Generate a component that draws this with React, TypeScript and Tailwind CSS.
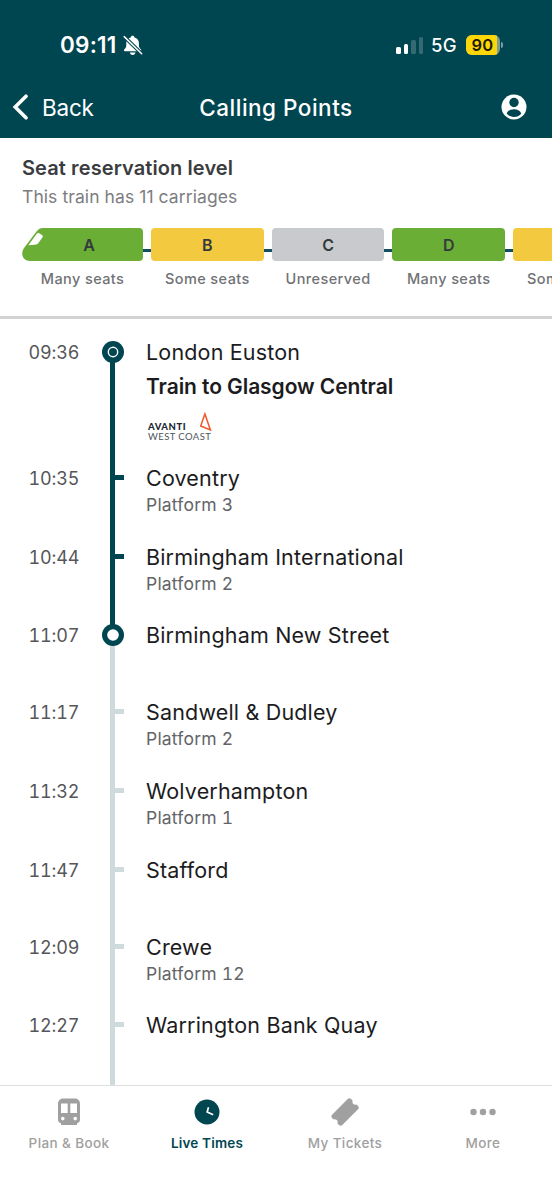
import type { ReactNode } from "react";
import clsx from "clsx";

type Stop = {
  time: string;
  name: string;
  platform?: string;
  height: string;
  marker: "origin" | "current" | "tick";
  before: "none" | "dark" | "light";
  after: "dark" | "light";
};

const STOPS: Stop[] = [
  { time: "09:36", name: "London Euston", height: "h-[126px]", marker: "origin", before: "none", after: "dark" },
  { time: "10:35", name: "Coventry", platform: "3", height: "h-[78.5px]", marker: "tick", before: "dark", after: "dark" },
  { time: "10:44", name: "Birmingham International", platform: "2", height: "h-[78.5px]", marker: "tick", before: "dark", after: "dark" },
  { time: "11:07", name: "Birmingham New Street", height: "h-[77px]", marker: "current", before: "dark", after: "light" },
  { time: "11:17", name: "Sandwell & Dudley", platform: "2", height: "h-[79px]", marker: "tick", before: "light", after: "light" },
  { time: "11:32", name: "Wolverhampton", platform: "1", height: "h-[78.5px]", marker: "tick", before: "light", after: "light" },
  { time: "11:47", name: "Stafford", height: "h-[77px]", marker: "tick", before: "light", after: "light" },
  { time: "12:09", name: "Crewe", platform: "12", height: "h-[78.5px]", marker: "tick", before: "light", after: "light" },
  { time: "12:27", name: "Warrington Bank Quay", height: "h-[78px]", marker: "tick", before: "light", after: "light" },
];

const CARRIAGES = [
  { letter: "B", label: "Some seats", color: "bg-[#f3c940]" },
  { letter: "C", label: "Unreserved", color: "bg-[#c8cacd]" },
  { letter: "D", label: "Many seats", color: "bg-[#6bae35]" },
  { letter: "E", label: "Some seats", color: "bg-[#f3c940]" },
];

const RAIL = {
  none: "bg-transparent",
  dark: "bg-[#004650]",
  light: "bg-[#cfdadd]",
};

function BellOff() {
  return (
    <svg width="20" height="21" viewBox="0 0 20 21" fill="none">
      <path
        d="M9.600.8c-1 0-1.700.7-1.900 1.600C5 3.200 3.300 5.200 3.300 7.800v2.700c0 1.700-.8 2.700-1.900 3.800-.9.900-.5 2 .7 2h15c1.200 0 1.600-1.100.7-2-1.100-1.100-1.900-2.100-1.900-3.800V7.800c0-2.600-1.700-4.600-4.400-5.400C11.300 1.500 10.600.8 9.600.8z"
        fill="#fff"
      />
      <path d="M6.800 17.600h5.700c-.3 1.500-1.400 2.300-2.850 2.300s-2.600-.8-2.850-2.300z" fill="#fff" />
      <path d="M1.200 1.600 18.700 18.800" stroke="#004650" strokeWidth="3.600" />
      <path d="M1.200 1.600 18.700 18.800" stroke="#fff" strokeWidth="1.500" strokeLinecap="round" />
    </svg>
  );
}

function StatusBar() {
  return (
    <div className="flex h-[74px] items-end pr-[49px] pb-[17px] pl-[60px]">
      <div className="flex h-6 items-center">
        <span className="w-[63px] text-[22.5px] leading-6 font-semibold tracking-[0.2px]">09:11</span>
        <BellOff />
      </div>
      <div className="ml-auto flex h-6 items-center">
        <div className="flex h-[17px] items-end gap-[3px]">
          <span className="h-[7px] w-[4.5px] rounded-[1.5px] bg-white" />
          <span className="h-[10px] w-[4.5px] rounded-[1.5px] bg-white" />
          <span className="h-[13.5px] w-[4.5px] rounded-[1.5px] bg-[#356a73]" />
          <span className="h-[17px] w-[4.5px] rounded-[1.5px] bg-[#356a73]" />
        </div>
        <span className="ml-[8px] w-[35px] text-[18.5px] leading-6 font-medium tracking-[0.2px]">5G</span>
        <div className="flex h-[20px] w-[34px] overflow-hidden rounded-[6px] bg-[#7d9d91]">
          <span className="w-[31px] bg-[#fdd60a] pl-[2px] text-center text-[16.5px] leading-[20px] font-semibold tracking-[0.2px] text-[#1c1c00]">
            90
          </span>
        </div>
        <span className="ml-[1px] h-[6px] w-[2px] rounded-r-full bg-[#7d9da2]" />
      </div>
    </div>
  );
}

function NavBar() {
  return (
    <div className="grid h-16 grid-cols-[1fr_auto_1fr] items-center px-[12px] pt-[2px]">
      <div className="flex items-center">
        <svg width="17" height="26" viewBox="0 0 17 26" fill="none">
          <path d="M14 2.200 3.200 13 14 23.800" stroke="#fff" strokeWidth="3.600" strokeLinecap="round" />
        </svg>
        <span className="mt-px ml-[13px] text-[22.5px] leading-7 tracking-[-0.2px]">Back</span>
      </div>
      <h1 className="mt-px text-[22.5px] leading-7 font-medium tracking-[0.5px]">Calling Points</h1>
      <svg className="mr-[13.5px] justify-self-end" width="26" height="26" viewBox="0 0 26 26">
        <circle cx="13" cy="13" r="12.500" fill="#fff" />
        <circle cx="13" cy="8.500" r="4.700" fill="#004650" />
        <path d="M5.700 19.400c1.200-2.800 4.100-4.200 7.300-4.200s6.100 1.400 7.300 4.200c-1.700 2.300-4.300 3.600-7.300 3.600s-5.600-1.300-7.300-3.600z" fill="#004650" />
      </svg>
    </div>
  );
}

function Carriages() {
  return (
    <div className="mt-[18px] flex overflow-hidden">
      <div className="w-[121px] shrink-0 text-center">
        <div className="relative h-[33px]">
          <svg className="block" width="121" height="33" viewBox="0 0 121 33">
            <path d="M21 0H117a4 4 0 0 1 4 4V29a4 4 0 0 1-4 4H8C1 33-2 26 2 20L14.500 3.500C16.500 1 18 0 21 0z" fill="#6bae35" />
            <path d="M14.800 5.700c.8-1 1.400-1 2.400-.4l2.800 1.700c1 .7 1 1.600.4 2.500l-3.800 5.300c-1 1.400-2 1.900-3.800 2l-6.500.4z" fill="#fff" />
          </svg>
          <span className="absolute inset-0 pl-[13px] text-[16px] leading-[34px] font-semibold text-[#333a3c]">A</span>
        </div>
        <p className="mt-[8px] text-[14.5px] leading-5 font-medium tracking-[0.4px] text-[#717276]">Many seats</p>
      </div>
      {CARRIAGES.map((carriage) => (
        <div key={carriage.letter} className="flex shrink-0">
          <span className="mt-[21px] h-[3px] w-[8px] bg-[#124e64]" />
          <div className="w-[112.7px] text-center">
            <div className={clsx("h-[33px] rounded-[4px] text-[16px] leading-[34px] font-semibold text-[#333a3c]", carriage.color)}>
              {carriage.letter}
            </div>
            <p className="mt-[8px] text-[14.5px] leading-5 font-medium tracking-[0.4px] text-[#717276]">{carriage.label}</p>
          </div>
        </div>
      ))}
    </div>
  );
}

function Marker({ type, color }: { type: Stop["marker"]; color: string }) {
  if (type === "tick") {
    return <span className={clsx("absolute top-[13px] left-[14px] h-[5px] w-[9px]", color)} />;
  }
  return (
    <svg className="absolute top-[5px] left-[0.5px]" width="22" height="22" viewBox="0 0 22 22">
      <circle cx="11" cy="11" r="11" fill="#004650" />
      {type === "origin" ? (
        <circle cx="11" cy="11" r="4.700" fill="none" stroke="#fff" strokeWidth="1.400" />
      ) : (
        <circle cx="11" cy="11" r="5.800" fill="#fff" />
      )}
    </svg>
  );
}

function OperatorLogo() {
  return (
    <div className="mt-[10px] ml-[2px] w-[66px] font-[Lato]">
      <div className="flex h-[20px] items-end justify-between">
        <span className="text-[9.5px] leading-[11px] font-black tracking-[0.55px] text-[#1b2a35]">AVANTI</span>
        <svg className="mr-[2px]" width="14" height="20" viewBox="0 0 14 20" fill="none">
          <path d="M6.900 2 2.700 14 12.400 18z" stroke="#f0562b" strokeWidth="1.500" />
        </svg>
      </div>
      <p className="text-[9.5px] leading-[9px] tracking-[0.42px] whitespace-nowrap text-[#4c555c]">WEST COAST</p>
    </div>
  );
}

function StopRow({ stop }: { stop: Stop }) {
  return (
    <li className={clsx("flex shrink-0", stop.height)}>
      <span className="mt-px w-[101px] pl-[28.5px] text-[18px] leading-8 tracking-[-0.15px] text-[#55565a] tabular-nums">{stop.time}</span>
      <div className="relative flex w-[23px] flex-col items-center">
        <span className={clsx("h-4 w-[5px]", RAIL[stop.before])} />
        <span className={clsx("w-[5px] grow", RAIL[stop.after])} />
        <Marker type={stop.marker} color={RAIL[stop.after]} />
      </div>
      <div className="ml-[22px]">
        <p className="text-[21.5px] leading-8 tracking-[0.17px] text-[#1c1c1e]">{stop.name}</p>
        {stop.platform && (
          <p className="text-[17.5px] leading-[22px] tracking-[0.2px] text-[#636467] tabular-nums">Platform {stop.platform}</p>
        )}
        {stop.marker === "origin" && (
          <>
            <p className="mt-[4px] text-[21px] leading-[30px] font-semibold tracking-[-0.08px] text-[#1c1c1e]">Train to Glasgow Central</p>
            <OperatorLogo />
          </>
        )}
      </div>
    </li>
  );
}

function Tab({ label, active, children }: { label: string; active?: boolean; children: ReactNode }) {
  return (
    <div className={clsx("flex flex-col items-center font-medium", active ? "text-[#004650]" : "text-[#a0a0a0]")}>
      <svg width="28" height="28" viewBox="0 0 28 28" fill="currentColor">
        {children}
      </svg>
      <span className={clsx("mt-[7px] text-[13.5px] leading-5", active ? "font-semibold tracking-[0.2px]" : "tracking-[0.38px]")}>{label}</span>
    </div>
  );
}

function TabBar() {
  return (
    <nav className="grid h-[115px] shrink-0 grid-cols-4 border-t border-[#dedede] bg-white pt-[12px]">
      <Tab label="Plan & Book">
        <path
          fillRule="evenodd"
          d="M8 .5h12a5 5 0 0 1 5 5v16a4 4 0 0 1-3 3.800v1.700H6v-1.700a4 4 0 0 1-3-3.800v-16a5 5 0 0 1 5-5zM6 5.500v9.500h6.700V5.500zm9.300 0v9.500H22V5.500zM7.800 18.800a1.800 1.800 0 1 0 0 3.600 1.800 1.800 0 0 0 0-3.600zm12.400 0a1.800 1.800 0 1 0 0 3.600 1.800 1.800 0 0 0 0-3.600z"
        />
      </Tab>
      <Tab label="Live Times" active>
        <circle cx="14" cy="14" r="12.500" />
        <path d="M15.500 9.300 14.200 14l6 2.800" fill="none" stroke="#fff" strokeWidth="1.700" />
      </Tab>
      <Tab label="My Tickets">
        <path d="M16.700 1.100q1.700-1.600 3.400 0l1.500 1.500c-.8 2.700 1.400 4.800 4 3.900l1.400 1.500q1.600 1.600 0 3.300L11.300 26.900q-1.700 1.600-3.300 0l-1.500-1.500c.9-2.600-1.300-4.800-3.900-4L1.100 20q-1.600-1.700 0-3.300z" />
      </Tab>
      <Tab label="More">
        <circle cx="4.500" cy="14" r="3.200" />
        <circle cx="14" cy="14" r="3.200" />
        <circle cx="23.500" cy="14" r="3.200" />
      </Tab>
    </nav>
  );
}

export default function App() {
  return (
    <main className="flex h-[1200px] w-[552px] flex-col overflow-hidden bg-white font-[Inter,sans-serif]">
      <header className="h-[138px] shrink-0 bg-[#004650] text-white">
        <StatusBar />
        <NavBar />
      </header>

      <section className="h-[181px] shrink-0 border-b-[3px] border-[#d3d3d3] pt-[16px] pl-[22px]">
        <h2 className="text-[20px] leading-7 font-semibold tracking-[0.1px] text-[#3b3c40]">Seat reservation level</h2>
        <p className="mt-[2px] text-[17.5px] leading-[26px] tracking-[0.08px] text-[#7c7d81]">This train has 11 carriages</p>
        <Carriages />
      </section>

      <ul className="flex min-h-0 grow flex-col overflow-hidden pt-[17px]">
        {STOPS.map((stop) => (
          <StopRow key={stop.time} stop={stop} />
        ))}
      </ul>

      <TabBar />
    </main>
  );
}
